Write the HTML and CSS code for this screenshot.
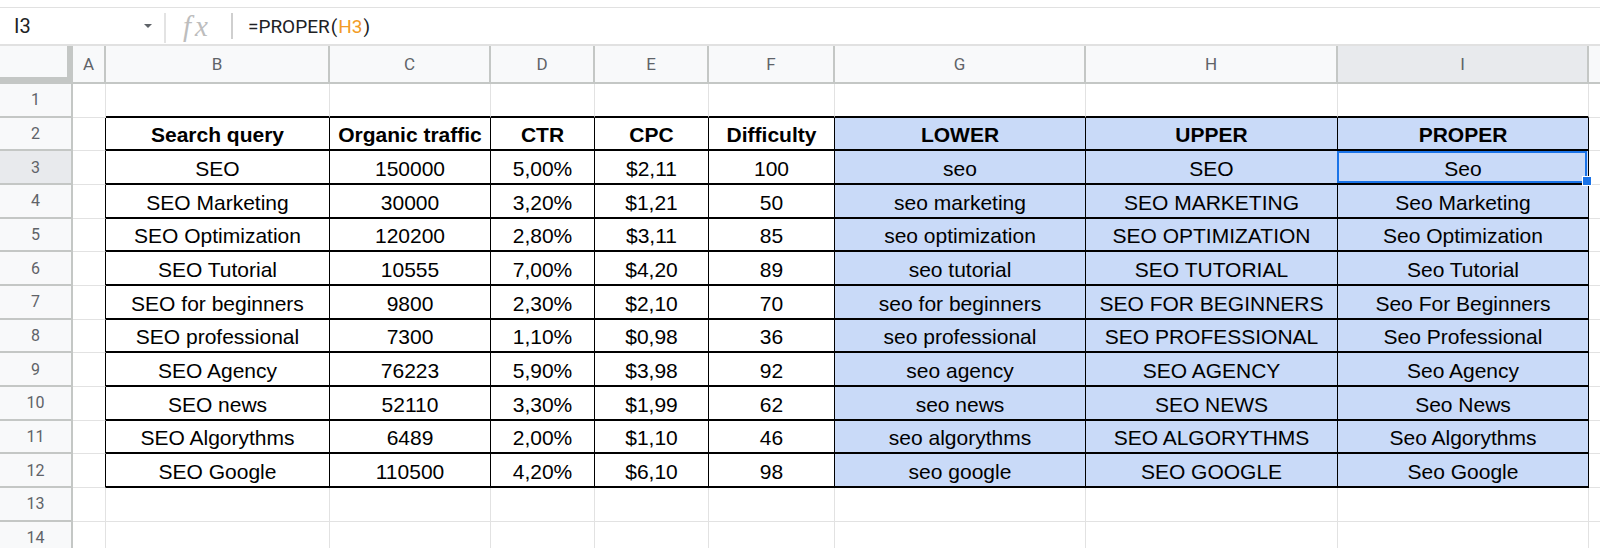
FILE: index.html
```html
<!DOCTYPE html>
<html lang="en">
<head>
    <meta charset="utf-8">
    <meta name="viewport" content="width=device-width, initial-scale=1">
    <title>SEO keywords - text case functions</title>
    <link rel="stylesheet" href="styles.css">
</head>
<body>
    <div class="formula-bar">
        <div class="name-box"><span>I3</span><span class="caret"></span></div>
        <div class="divider"></div>
        <div class="fx">fx</div>
        <div class="divider short"></div>
        <div class="formula">=PROPER<span class="paren">(</span><span class="ref">H3</span><span class="paren">)</span></div>
    </div>

    <div class="sheet">
        <div class="row">
            <div class="corner"></div>
            <div class="col-h">A</div>
            <div class="col-h">B</div>
            <div class="col-h">C</div>
            <div class="col-h">D</div>
            <div class="col-h">E</div>
            <div class="col-h">F</div>
            <div class="col-h">G</div>
            <div class="col-h">H</div>
            <div class="col-h on">I</div>
            <div class="col-h"></div>
        </div>

        <div class="row">
            <div class="row-h">1</div>
            <div class="c"></div>
            <div class="c top"></div>
            <div class="c top"></div>
            <div class="c top"></div>
            <div class="c top"></div>
            <div class="c top"></div>
            <div class="c top"></div>
            <div class="c top"></div>
            <div class="c top"></div>
            <div class="c"></div>
        </div>

        <div class="row">
            <div class="row-h">2</div>
            <div class="c edge"></div>
            <div class="c t b">Search query</div>
            <div class="c t b">Organic traffic</div>
            <div class="c t b">CTR</div>
            <div class="c t b">CPC</div>
            <div class="c t b">Difficulty</div>
            <div class="c t b blue">LOWER</div>
            <div class="c t b blue">UPPER</div>
            <div class="c t b blue">PROPER</div>
            <div class="c"></div>
        </div>

        <div class="row">
            <div class="row-h on">3</div>
            <div class="c edge"></div>
            <div class="c t">SEO</div>
            <div class="c t">150000</div>
            <div class="c t">5,00%</div>
            <div class="c t">$2,11</div>
            <div class="c t">100</div>
            <div class="c t blue">seo</div>
            <div class="c t blue">SEO</div>
            <div class="c t blue sel">Seo<span class="handle"></span></div>
            <div class="c"></div>
        </div>

        <div class="row">
            <div class="row-h">4</div>
            <div class="c edge"></div>
            <div class="c t">SEO Marketing</div>
            <div class="c t">30000</div>
            <div class="c t">3,20%</div>
            <div class="c t">$1,21</div>
            <div class="c t">50</div>
            <div class="c t blue">seo marketing</div>
            <div class="c t blue">SEO MARKETING</div>
            <div class="c t blue">Seo Marketing</div>
            <div class="c"></div>
        </div>

        <div class="row">
            <div class="row-h">5</div>
            <div class="c edge"></div>
            <div class="c t">SEO Optimization</div>
            <div class="c t">120200</div>
            <div class="c t">2,80%</div>
            <div class="c t">$3,11</div>
            <div class="c t">85</div>
            <div class="c t blue">seo optimization</div>
            <div class="c t blue">SEO OPTIMIZATION</div>
            <div class="c t blue">Seo Optimization</div>
            <div class="c"></div>
        </div>

        <div class="row">
            <div class="row-h">6</div>
            <div class="c edge"></div>
            <div class="c t">SEO Tutorial</div>
            <div class="c t">10555</div>
            <div class="c t">7,00%</div>
            <div class="c t">$4,20</div>
            <div class="c t">89</div>
            <div class="c t blue">seo tutorial</div>
            <div class="c t blue">SEO TUTORIAL</div>
            <div class="c t blue">Seo Tutorial</div>
            <div class="c"></div>
        </div>

        <div class="row">
            <div class="row-h">7</div>
            <div class="c edge"></div>
            <div class="c t">SEO for beginners</div>
            <div class="c t">9800</div>
            <div class="c t">2,30%</div>
            <div class="c t">$2,10</div>
            <div class="c t">70</div>
            <div class="c t blue">seo for beginners</div>
            <div class="c t blue">SEO FOR BEGINNERS</div>
            <div class="c t blue">Seo For Beginners</div>
            <div class="c"></div>
        </div>

        <div class="row">
            <div class="row-h">8</div>
            <div class="c edge"></div>
            <div class="c t">SEO professional</div>
            <div class="c t">7300</div>
            <div class="c t">1,10%</div>
            <div class="c t">$0,98</div>
            <div class="c t">36</div>
            <div class="c t blue">seo professional</div>
            <div class="c t blue">SEO PROFESSIONAL</div>
            <div class="c t blue">Seo Professional</div>
            <div class="c"></div>
        </div>

        <div class="row">
            <div class="row-h">9</div>
            <div class="c edge"></div>
            <div class="c t">SEO Agency</div>
            <div class="c t">76223</div>
            <div class="c t">5,90%</div>
            <div class="c t">$3,98</div>
            <div class="c t">92</div>
            <div class="c t blue">seo agency</div>
            <div class="c t blue">SEO AGENCY</div>
            <div class="c t blue">Seo Agency</div>
            <div class="c"></div>
        </div>

        <div class="row">
            <div class="row-h">10</div>
            <div class="c edge"></div>
            <div class="c t">SEO news</div>
            <div class="c t">52110</div>
            <div class="c t">3,30%</div>
            <div class="c t">$1,99</div>
            <div class="c t">62</div>
            <div class="c t blue">seo news</div>
            <div class="c t blue">SEO NEWS</div>
            <div class="c t blue">Seo News</div>
            <div class="c"></div>
        </div>

        <div class="row">
            <div class="row-h">11</div>
            <div class="c edge"></div>
            <div class="c t">SEO Algorythms</div>
            <div class="c t">6489</div>
            <div class="c t">2,00%</div>
            <div class="c t">$1,10</div>
            <div class="c t">46</div>
            <div class="c t blue">seo algorythms</div>
            <div class="c t blue">SEO ALGORYTHMS</div>
            <div class="c t blue">Seo Algorythms</div>
            <div class="c"></div>
        </div>

        <div class="row">
            <div class="row-h">12</div>
            <div class="c edge"></div>
            <div class="c t">SEO Google</div>
            <div class="c t">110500</div>
            <div class="c t">4,20%</div>
            <div class="c t">$6,10</div>
            <div class="c t">98</div>
            <div class="c t blue">seo google</div>
            <div class="c t blue">SEO GOOGLE</div>
            <div class="c t blue">Seo Google</div>
            <div class="c"></div>
        </div>

        <div class="row">
            <div class="row-h">13</div>
            <div class="c"></div>
            <div class="c"></div>
            <div class="c"></div>
            <div class="c"></div>
            <div class="c"></div>
            <div class="c"></div>
            <div class="c"></div>
            <div class="c"></div>
            <div class="c"></div>
            <div class="c"></div>
        </div>

        <div class="row">
            <div class="row-h">14</div>
            <div class="c"></div>
            <div class="c"></div>
            <div class="c"></div>
            <div class="c"></div>
            <div class="c"></div>
            <div class="c"></div>
            <div class="c"></div>
            <div class="c"></div>
            <div class="c"></div>
            <div class="c"></div>
        </div>
    </div>
</body>
</html>
```

FILE: styles.css
```css
* {
    box-sizing: border-box;
}
html, body {
    margin: 0;
    overflow: hidden;
    background: #fff;
}
body {
    font-family: Roboto, Arial, sans-serif;
}

/* formula bar */
.formula-bar {
    display: flex;
    align-items: center;
    height: 39px;
    margin-top: 7px;
    border-top: 1px solid #e1e1e1;
    border-bottom: 2px solid #e1e1e1;
}
.name-box {
    width: 164px;
    display: flex;
    align-items: center;
    justify-content: space-between;
    padding: 0 12px 0 14px;
    font-size: 20px;
    color: #202124;
}
.caret {
    width: 0;
    height: 0;
    border-left: 4px solid transparent;
    border-right: 4px solid transparent;
    border-top: 4px solid #5f6368;
}
.divider {
    width: 2px;
    height: 30px;
    margin-top: 4px;
    background: #e3e3e3;
}
.divider.short {
    height: 26px;
    margin-top: 0;
    background: #cfcfcf;
}
.fx {
    width: 29px;
    margin: 0 19px 0 17px;
    font: italic 29px "Liberation Serif", serif;
    letter-spacing: 4px;
    color: #bdbdbd;
    white-space: nowrap;
}
.formula {
    margin-left: 15px;
    font-size: 19px;
    color: #202124;
}
.paren {
    margin: 0 1px;
}
.ref {
    color: #f29b26;
}

/* grid */
.sheet {
    display: grid;
    grid-template-columns: 73px 33px 224px 161px 104px 114px 126px 251px 252px 251px 60px;
    grid-template-rows: 38px;
    grid-auto-rows: 33.67px;
}
.row {
    display: contents;
}
.corner {
    background: #f8f9fa;
    border-right: 6px solid #c4c7c5;
    border-bottom: 7px solid #c4c7c5;
}
.col-h, .row-h {
    display: flex;
    align-items: center;
    justify-content: center;
    background: #f8f9fa;
    border-right: 2px solid #c4c7c5;
    border-bottom: 2px solid #c4c7c5;
    color: #5f6368;
}
.col-h {
    font-size: 17px;
}
.row-h {
    font-size: 16px;
}
.col-h.on, .row-h.on {
    background: #e8eaed;
}

.c {
    display: flex;
    align-items: flex-end;
    justify-content: center;
    padding-bottom: 2px;
    border-right: 1px solid #e2e2e2;
    border-bottom: 1px solid #e2e2e2;
    font: 21px/24px "Liberation Sans", Arial, sans-serif;
    color: #000;
    white-space: nowrap;
}
.c.edge {
    border-right-color: #000;
}
.c.top {
    border-bottom: 2px solid #000;
}
.c.t {
    border-right-color: #000;
    border-bottom: 2px solid #000;
}
.b {
    font-weight: bold;
}
.blue {
    background: #c9daf8;
}

/* selected cell */
.sel {
    position: relative;
    z-index: 1;
}
.sel::after {
    content: "";
    position: absolute;
    left: -1px;
    top: 0;
    right: 1px;
    bottom: 0;
    border: 2px solid #1a73e8;
}
.handle {
    position: absolute;
    right: -4px;
    bottom: -3px;
    width: 10px;
    height: 10px;
    background: #1a73e8;
    border: 1px solid #fff;
    z-index: 2;
}
```
